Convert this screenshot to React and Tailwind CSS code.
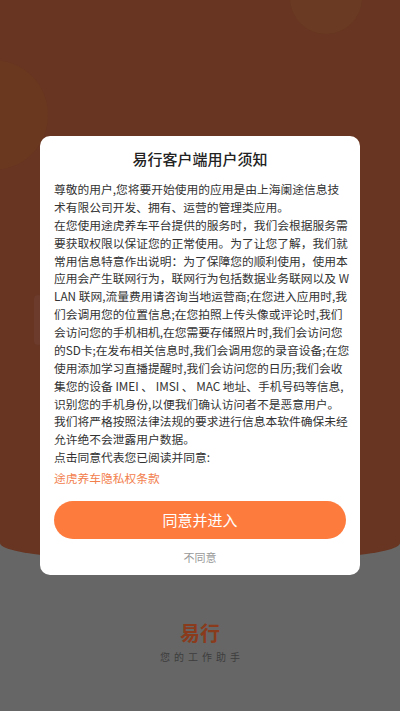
import React from "react";

const lines = [
  "尊敬的用户,您将要开始使用的应用是由上海阑途信息技",
  "术有限公司开发、拥有、运营的管理类应用。",
  "在您使用途虎养车平台提供的服务时，我们会根据服务需",
  "要获取权限以保证您的正常使用。为了让您了解，我们就",
  "常用信息特意作出说明：为了保障您的顺利使用，使用本",
  "应用会产生联网行为，联网行为包括数据业务联网以及 W",
  "LAN 联网,流量费用请咨询当地运营商;在您进入应用时,我",
  "们会调用您的位置信息;在您拍照上传头像或评论时,我们",
  "会访问您的手机相机,在您需要存储照片时,我们会访问您",
  "的SD卡;在发布相关信息时,我们会调用您的录音设备;在您",
  "使用添加学习直播提醒时,我们会访问您的日历;我们会收",
  "集您的设备 IMEI 、 IMSI 、 MAC 地址、手机号码等信息,",
  "识别您的手机身份,以便我们确认访问者不是恶意用户。",
  "我们将严格按照法律法规的要求进行信息本软件确保未经",
  "允许绝不会泄露用户数据。",
  "点击同意代表您已阅读并同意:",
];

const font = { fontFamily: '"Noto Sans CJK SC", "Noto Sans", sans-serif' };

export default function App() {
  return (
    <div className="relative flex h-[711px] w-full flex-col overflow-hidden bg-[#666666]" style={font}>
      {/* orange header, dimmed by the modal mask */}
      <div className="relative h-[563px] shrink-0 overflow-hidden bg-[#673521] [border-bottom-left-radius:200px_20px] [border-bottom-right-radius:200px_20px]">
        <div className="absolute -top-[38px] right-[38px] h-[72px] w-[72px] rounded-full bg-[#6a3a22]" />
        <div className="absolute top-[60px] -left-[62px] h-[110px] w-[110px] rounded-full bg-[#69381f]" />
        <div className="absolute top-[295px] left-[34px] h-[50px] w-[8px] rounded bg-[#6c3b2b]" />
      </div>

      <div className="mt-[58px] flex flex-col items-center">
        <div className="text-[20px] leading-[24px] font-bold text-[#8a3b1c]">易行</div>
        <div className="mt-[5px] pl-[4px] text-[10px] leading-[14px] tracking-[4px] text-[#3d3d3d]">您的工作助手</div>
      </div>

      {/* dialog */}
      <div className="absolute top-[136px] left-[40px] flex h-[439px] w-[320px] flex-col rounded-[10px] bg-white px-[14px]">
        <div className="pt-[12px] text-center text-[15px] leading-[22px] font-medium text-[#222222]">
          易行客户端用户须知
        </div>
        <div className="mt-[10px] text-[11.75px] leading-[17.87px] text-[#333333]">
          {lines.map((l, i) => (
            <div key={i} className="whitespace-pre">{l}</div>
          ))}
        </div>
        <div className="mt-[3px] text-[11.75px] leading-[18px] text-[#f2804d]">途虎养车隐私权条款</div>
        <button className="mt-[14px] flex h-[38px] w-full items-center justify-center rounded-full bg-[#fe7b3e] text-[15px] text-white">
          同意并进入
        </button>
        <div className="mt-[10px] text-center text-[11px] leading-[16px] text-[#999999]">不同意</div>
      </div>
    </div>
  );
}
